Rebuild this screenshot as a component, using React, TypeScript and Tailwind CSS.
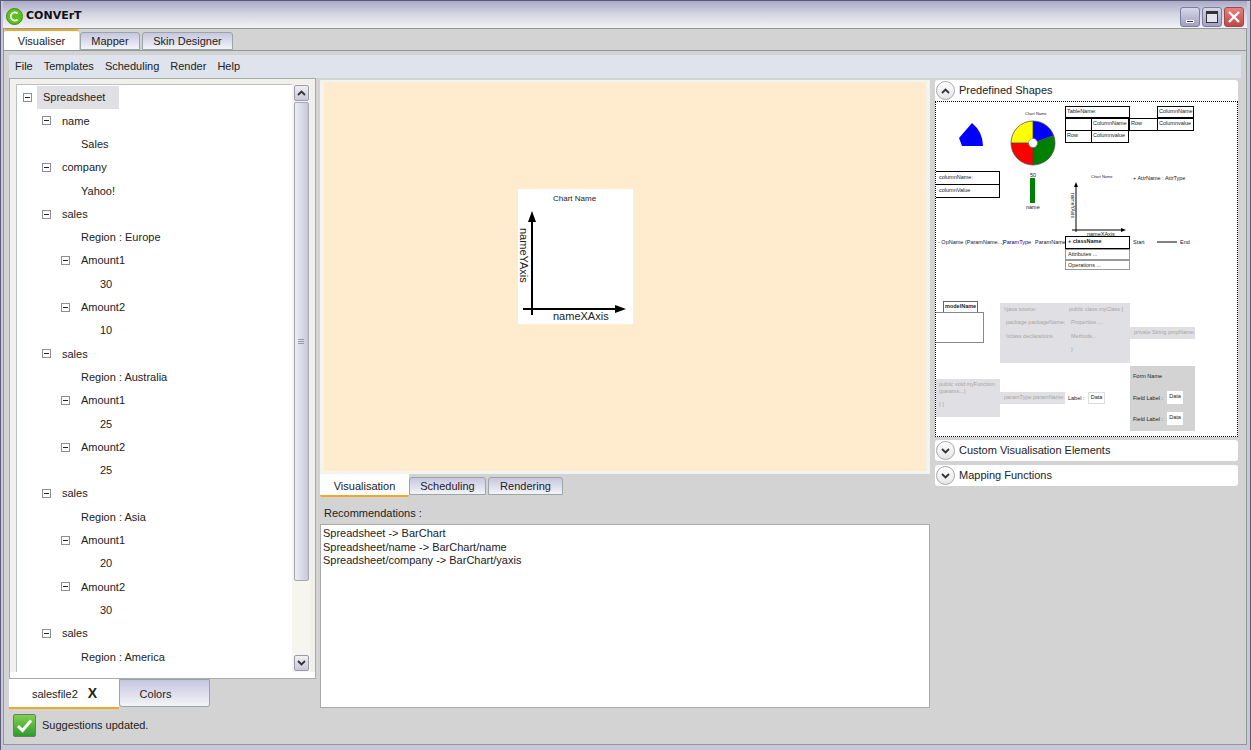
const treeRows: { label: string; level: number; box: boolean }[] = [
  { label: "Spreadsheet", level: 0, box: true },
  { label: "name", level: 1, box: true },
  { label: "Sales", level: 2, box: false },
  { label: "company", level: 1, box: true },
  { label: "Yahoo!", level: 2, box: false },
  { label: "sales", level: 1, box: true },
  { label: "Region : Europe", level: 2, box: false },
  { label: "Amount1", level: 2, box: true },
  { label: "30", level: 3, box: false },
  { label: "Amount2", level: 2, box: true },
  { label: "10", level: 3, box: false },
  { label: "sales", level: 1, box: true },
  { label: "Region : Australia", level: 2, box: false },
  { label: "Amount1", level: 2, box: true },
  { label: "25", level: 3, box: false },
  { label: "Amount2", level: 2, box: true },
  { label: "25", level: 3, box: false },
  { label: "sales", level: 1, box: true },
  { label: "Region : Asia", level: 2, box: false },
  { label: "Amount1", level: 2, box: true },
  { label: "20", level: 3, box: false },
  { label: "Amount2", level: 2, box: true },
  { label: "30", level: 3, box: false },
  { label: "sales", level: 1, box: true },
  { label: "Region : America", level: 2, box: false },
];

const menus = ["File", "Templates", "Scheduling", "Render", "Help"];

const inactiveTab =
  "flex items-center justify-center rounded-t-[3px] border border-[#9aa5a5] bg-gradient-to-b from-[#c6c6e0] to-[#f4f4f8] text-[#222]";

function Tree() {
  return (
    <div className="flex-1 overflow-hidden border-l border-t border-[#b9c0c8] bg-white pt-[1px]">
      {treeRows.map((row, i) => (
        <TreeRow key={i} {...row} />
      ))}
    </div>
  );
}

function TreeRow({ label, level, box }: { label: string; level: number; box: boolean }) {
  const boxIndent = ["pl-[6px]", "pl-[25px]", "pl-[44px]"][level];
  const textIndent = ["pl-[26px]", "pl-[45px]", "pl-[64px]", "pl-[83px]"][level];
  return (
    <div className={`flex h-[23.3px] items-center ${box ? boxIndent : textIndent}`}>
      {box && (
        <span className="mr-[11px] flex h-[9px] w-[9px] shrink-0 items-center justify-center border border-[#8a8f98] bg-white">
          <span className="h-px w-[5px] bg-[#222]" />
        </span>
      )}
      <span className={level === 0 ? "-ml-[6px] flex h-[23px] w-[82px] items-center bg-[#dfdfe4] pl-[6px]" : ""}>
        {label}
      </span>
    </div>
  );
}

function Chevron({ up }: { up?: boolean }) {
  return (
    <svg width="9" height="6" viewBox="0 0 9 6">
      <path d={up ? "M1 5 L4.5 1.5 L8 5" : "M1 1 L4.5 4.5 L8 1"} fill="none" stroke="#333" strokeWidth="1.8" />
    </svg>
  );
}

function ScrollBar() {
  return (
    <div className="flex w-[18px] shrink-0 flex-col items-center bg-[#f6f5f0] pt-[1px]">
      <div className="flex h-[16px] w-[15px] shrink-0 items-center justify-center rounded-[2px] border border-[#9a9aa8] bg-gradient-to-b from-[#f0f0f5] to-[#c8c8d8]">
        <Chevron up />
      </div>
      <div className="mt-[1px] flex h-[479px] w-[15px] shrink-0 items-center justify-center rounded-[2px] border border-[#a4a4b2] bg-gradient-to-r from-[#eeeef4] to-[#c8c8d8]">
        <div className="flex flex-col gap-px">
          <span className="h-px w-[6px] bg-[#9a9aa8]" />
          <span className="h-px w-[6px] bg-[#9a9aa8]" />
          <span className="h-px w-[6px] bg-[#9a9aa8]" />
        </div>
      </div>
      <div className="mt-[74px] flex h-[16px] w-[15px] shrink-0 items-center justify-center rounded-[2px] border border-[#9a9aa8] bg-gradient-to-b from-[#f0f0f5] to-[#c8c8d8]">
        <Chevron />
      </div>
    </div>
  );
}

function LeftPanel() {
  return (
    <div className="flex w-[307px] shrink-0 flex-col">
      <div className="flex h-[601px] flex-col border border-[#a8aca8] bg-[#f1f0ea]">
        <div className="flex h-[593px] pl-[6px] pr-[5px] pt-[5px]">
          <Tree />
          <ScrollBar />
        </div>
        <div className="flex-1 bg-white" />
      </div>
      <div className="flex h-[30px] items-start">
        <div className="flex h-[30px] w-[110px] items-center justify-center gap-[10px] border-b-2 border-[#f0a828] bg-white pl-px">
          <span className="pt-[3px]">salesfile2</span>
          <span className="text-[14px] font-bold">X</span>
        </div>
        <div className={`h-[28px] w-[91px] !rounded-t-none rounded-b-[3px] pr-[18px] pt-[3px] ${inactiveTab}`}>Colors</div>
      </div>
    </div>
  );
}

function ChartPreview() {
  return (
    <div className="relative h-[135px] w-[115px] bg-white">
      <span className="absolute left-[35px] top-[4px] whitespace-nowrap text-[8px] text-[#222]">Chart Name</span>
      <svg className="absolute inset-0" width="115" height="135" viewBox="0 0 115 135">
        <path d="M14 126 V28" stroke="#000" strokeWidth="2" />
        <path d="M14 22 L10 33 H18 Z" fill="#000" />
        <path d="M5 120 H102" stroke="#000" strokeWidth="2" />
        <path d="M108 120 L97 116 V124 Z" fill="#000" />
      </svg>
      <span className="absolute left-[35px] top-[120px] text-[11px] leading-[14px] text-[#222]">nameXAxis</span>
      <span className="absolute left-[-1px] top-[39px] text-[11px] leading-[14px] text-[#222] [writing-mode:vertical-rl]">
        nameYAxis
      </span>
    </div>
  );
}

function CenterPanel() {
  return (
    <div className="flex w-[610px] shrink-0 flex-col pt-[2px]">
      <div className="h-[394px] border-x-[4px] border-b-[3px] border-t-[2px] border-x-[#f4f4ee] border-b-[#f4f4ee] border-t-[#f4f4ee] bg-[#ffeccf] pl-[194px] pt-[107px]">
        <ChartPreview />
      </div>
      <div className="flex h-[23px] items-start">
        <div className="flex h-[23px] w-[89px] items-center justify-center rounded-b-[2px] border-b-2 border-[#f0a828] bg-white pt-[3px]">
          Visualisation
        </div>
        <div className={`mt-[3px] h-[18px] w-[77px] pt-px ${inactiveTab}`}>Scheduling</div>
        <div className={`ml-[2px] mt-[3px] h-[18px] w-[75px] pt-px ${inactiveTab}`}>Rendering</div>
      </div>
      <div className="flex h-[27px] items-center pl-[4px] pt-[6px]">Recommendations :</div>
      <div className="h-[184px] border border-[#a8aca8] bg-white pl-[2px] pt-[2px] leading-[13.5px]">
        <div>Spreadsheet -&gt; BarChart</div>
        <div>Spreadsheet/name -&gt; BarChart/name</div>
        <div>Spreadsheet/company -&gt; BarChart/yaxis</div>
      </div>
    </div>
  );
}

function CircleIcon({ up }: { up?: boolean }) {
  return (
    <span className="mx-px flex h-[19px] w-[19px] items-center justify-center rounded-full border border-[#a8a8a8] bg-gradient-to-b from-white to-[#e6e6ea]">
      <Chevron up={up} />
    </span>
  );
}

function AccordionHead({ title, up, className }: { title: string; up?: boolean; className?: string }) {
  return (
    <div className={`flex h-[21px] items-center gap-[3px] rounded-t-[3px] bg-white text-[11px] ${className ?? ""}`}>
      <CircleIcon up={up} />
      <span>{title}</span>
    </div>
  );
}

function Pie() {
  return (
    <svg className="absolute left-[75px] top-[19px]" width="46" height="46" viewBox="-23 -23 46 46">
      <path d="M0 0 L0 -22 A22 22 0 0 1 20.7 -7.5 Z" fill="#0000ff" />
      <path d="M0 0 L20.7 -7.5 A22 22 0 0 1 0 22 Z" fill="#008000" />
      <path d="M0 0 L0 22 A22 22 0 0 1 -22 0 Z" fill="#ff0000" />
      <path d="M0 0 L-22 0 A22 22 0 0 1 0 -22 Z" fill="#ffff00" />
      <path d="M0 -22 V22 M-22 0 H0 M0 0 L20.7 -7.5" stroke="#444" strokeWidth="0.8" />
      <circle r="22" fill="none" stroke="#555" strokeWidth="0.8" />
      <circle r="4.5" fill="#fff" stroke="#666" strokeWidth="0.5" />
    </svg>
  );
}

// canvas of shapes: every item's place on the canvas is the content here
function ShapesCanvas() {
  const cell = "absolute overflow-hidden whitespace-nowrap border-[1.5px] border-black bg-white pl-[1px] leading-[9px]";
  const tiny = "absolute whitespace-nowrap leading-[8px]";
  const soft = "absolute whitespace-nowrap leading-[8px] text-[#a9a69c]";
  return (
    <div className="h-[336px] overflow-hidden border border-dotted border-black bg-white text-[5.5px] text-[#222]">
      <div className="relative -m-px h-[336px]">
        <svg className="absolute left-[23px] top-[20px]" width="28" height="28" viewBox="0 0 28 28">
          <path d="M14 2 L1 17 L4 25 H25 Q25 11 14 2 Z" fill="#0000ff" />
        </svg>
        <span className={`${tiny} left-[90px] top-[9px] text-[4px]`}>Chart Name</span>
        <Pie />

        <div className={`${cell} left-[130px] top-[5px] h-[12px] w-[65px]`}>TableName:</div>
        <div className={`${cell} left-[130px] top-[17px] h-[13px] w-[27px]`} />
        <div className={`${cell} left-[156px] top-[17px] h-[13px] w-[38px]`}>ColumnName</div>
        <div className={`${cell} left-[130px] top-[29px] h-[13px] w-[27px]`}>Row</div>
        <div className={`${cell} left-[156px] top-[29px] h-[13px] w-[38px]`}>Columnvalue</div>
        <div className={`${cell} left-[222px] top-[5px] h-[12px] w-[37px]`}>ColumnName</div>
        <div className={`${cell} left-[194px] top-[17px] h-[13px] w-[29px]`}>Row</div>
        <div className={`${cell} left-[222px] top-[17px] h-[13px] w-[37px]`}>Columnvalue</div>

        <div className={`${cell} left-0 top-[70px] h-[14px] w-[65px] pl-[3px] leading-[11px]`}>columnName:</div>
        <div className={`${cell} left-0 top-[83px] h-[14px] w-[65px] pl-[3px] leading-[11px]`}>columnValue</div>

        <span className={`${tiny} left-[95px] top-[70px]`}>50</span>
        <div className="absolute left-[95px] top-[77px] h-[25px] w-[5px] bg-[#008000]" />
        <span className={`${tiny} left-[91px] top-[102px]`}>name</span>

        <span className={`${tiny} left-[156px] top-[72px] text-[4px]`}>Chart Name</span>
        <svg className="absolute left-[135px] top-[79px]" width="60" height="60" viewBox="0 0 60 60">
          <path d="M6 52 V5 M2 50 H52" stroke="#000" strokeWidth="1" />
          <path d="M6 2 L4 7 H8 Z M56 50 L51 48 V52 Z" fill="#000" />
        </svg>
        <span className={`${tiny} left-[134px] top-[92px] text-[5px] [writing-mode:vertical-rl]`}>nameYAxis</span>
        <span className={`${tiny} left-[152px] top-[129px]`}>nameXAxis</span>
        <span className={`${tiny} left-[198px] top-[73px]`}>+ AttrName : AttrType</span>

        <span className={`${tiny} left-[3px] top-[137px]`}>- OpName (ParamName...)</span>
        <span className={`${tiny} left-[68px] top-[137px] text-[#00009a]`}>ParamType</span>
        <span className={`${tiny} left-[100px] top-[137px]`}>ParamName:</span>
        <div className={`${cell} left-[130px] top-[135px] h-[13px] w-[65px] pl-[2px] font-bold`}>+ className</div>
        <div className="absolute left-[130px] top-[148px] h-[11px] w-[65px] border border-[#999] pl-[2px] leading-[8px]">Attributes ...</div>
        <div className="absolute left-[130px] top-[159px] h-[10px] w-[65px] border border-[#999] pl-[2px] leading-[8px]">Operations ...</div>
        <span className={`${tiny} left-[198px] top-[137px]`}>Start</span>
        <div className="absolute left-[222px] top-[140px] h-[2px] w-[20px] bg-[#808080]" />
        <span className={`${tiny} left-[245px] top-[137px]`}>End</span>

        <div className={`${cell} left-[8px] top-[200px] h-[12px] w-[35px] !border-[1px] !border-[#666] pl-[1px] font-bold`}>modelName</div>
        <div className="absolute left-0 top-[211px] h-[31px] w-[49px] border border-[#888]" />

        <div className="absolute left-[65px] top-[202px] h-[60px] w-[130px] bg-[#dfdfe4]" />
        <span className={`${soft} left-[69px] top-[204px]`}>\\java source:</span>
        <span className={`${soft} left-[71px] top-[217px]`}>package packageName;</span>
        <span className={`${soft} left-[71px] top-[231px]`}>\\class declarations</span>
        <span className={`${soft} left-[134px] top-[204px]`}>public class myClass {"{"}</span>
        <span className={`${soft} left-[136px] top-[217px]`}>Properties ...</span>
        <span className={`${soft} left-[136px] top-[231px]`}>Methods...</span>
        <span className={`${soft} left-[136px] top-[244px]`}>{"}"}</span>

        <div className="absolute left-[195px] top-[226px] h-[12px] w-[65px] overflow-hidden whitespace-nowrap bg-[#dfdfe4] pl-[4px] leading-[11px] text-[#a9a69c]">private String propName;</div>

        <div className="absolute left-0 top-[278px] h-[38px] w-[65px] bg-[#dfdfe4] pl-[4px] pt-[2px] leading-[7px] text-[#a9a69c]">
          <div>public void myFunction</div>
          <div>(params...)</div>
          <div className="mt-[6px]">{"{ }"}</div>
        </div>
        <div className="absolute left-[65px] top-[291px] h-[12px] w-[65px] overflow-hidden whitespace-nowrap bg-[#dfdfe4] pl-[4px] leading-[11px] text-[#a9a69c]">paramType paramName</div>
        <span className={`${tiny} left-[133px] top-[293px]`}>Label :</span>
        <div className="absolute left-[153px] top-[291px] h-[12px] w-[17px] border border-[#ddd] text-center leading-[9px]">Data</div>

        <div className="absolute left-[195px] top-[265px] h-[65px] w-[65px] bg-[#d3d3d3]" />
        <span className={`${tiny} left-[198px] top-[271px]`}>Form Name</span>
        <span className={`${tiny} left-[198px] top-[293px]`}>Field Label :</span>
        <div className="absolute left-[232px] top-[290px] h-[13px] w-[16px] bg-white text-center leading-[11px]">Data</div>
        <span className={`${tiny} left-[198px] top-[314px]`}>Field Label :</span>
        <div className="absolute left-[232px] top-[311px] h-[13px] w-[16px] bg-white text-center leading-[11px]">Data</div>
      </div>
    </div>
  );
}

function RightPanel() {
  return (
    <div className="flex w-[303px] shrink-0 flex-col pt-[2px]">
      <AccordionHead title="Predefined Shapes" up />
      <ShapesCanvas />
      <AccordionHead title="Custom Visualisation Elements" className="mt-[3px] rounded-b-[3px]" />
      <AccordionHead title="Mapping Functions" className="mt-[4px] rounded-b-[3px]" />
    </div>
  );
}

function TitleBar() {
  return (
    <div className="flex h-[27px] shrink-0 items-center bg-gradient-to-b from-[#aaaac8] via-[#d6d6e4] to-[#f2f2f6] pl-[3px] pr-[3px] pt-[4px]">
      <svg width="17" height="17" viewBox="0 0 17 17">
        <circle cx="8.5" cy="8.5" r="8" fill="#5cc020" stroke="#3c8c14" />
        <path d="M11.5 5.5 A4 4 0 1 0 11.5 11.5" fill="none" stroke="#fff" strokeWidth="1.8" />
      </svg>
      <span className="ml-[3px] font-['DejaVu_Sans'] text-[11px] font-semibold text-[#111]">CONVErT</span>
      <div className="ml-auto flex gap-[2px]">
        <span className="flex h-[20px] w-[20px] items-end justify-center rounded-[3px] border border-[#7c7ca0] bg-gradient-to-b from-[#d8d8e8] to-[#a0a0c0] pb-[3px]">
          <span className="h-[3px] w-[8px] border border-white bg-[#333]" />
        </span>
        <span className="flex h-[20px] w-[20px] items-center justify-center rounded-[3px] border border-[#7c7ca0] bg-gradient-to-b from-[#d8d8e8] to-[#a0a0c0]">
          <span className="h-[12px] w-[12px] border border-[#333] border-t-[3px] bg-[#e4e4f0]" />
        </span>
        <span className="flex h-[20px] w-[20px] items-center justify-center rounded-[3px] border border-[#a04848] bg-gradient-to-b from-[#e88080] to-[#c04848]">
          <svg width="14" height="14" viewBox="0 0 14 14">
            <path d="M2 2 L12 12 M12 2 L2 12" stroke="#fff" strokeWidth="2.4" />
          </svg>
        </span>
      </div>
    </div>
  );
}

function TopTabs() {
  return (
    <div className="flex h-[22px] shrink-0 items-end border-b border-[#8f9a9c]">
      <div className="flex h-[21px] w-[75px] items-center justify-center rounded-t-[3px] border-t-2 border-[#f0a828] bg-white pt-[2px]">
        Visualiser
      </div>
      <div className={`ml-px h-[18px] w-[60px] pt-px ${inactiveTab}`}>Mapper</div>
      <div className={`ml-[2px] h-[18px] w-[91px] pt-px ${inactiveTab}`}>Skin Designer</div>
    </div>
  );
}

export default function App() {
  return (
    <div className="h-[750px] w-[1251px] overflow-hidden border-x border-t border-b-0 border-[#5c5c78] bg-[#c8c8da] font-['Liberation_Sans',sans-serif] text-[11px] text-[#222]">
      <div className="flex h-full flex-col pl-[2px] pr-[3px]">
        <TitleBar />
        <div className="flex h-[717px] flex-col border border-[#8f9a94] bg-[#d3d3d3]">
          <TopTabs />
          <div className="mx-[5px] mt-[4px] flex h-[23px] shrink-0 items-center gap-[11px] bg-[#dfe3ec] pl-[6px]">
            {menus.map((m) => (
              <span key={m}>{m}</span>
            ))}
          </div>
          <div className="mx-[5px] flex gap-[4px]">
            <LeftPanel />
            <CenterPanel />
            <div className="ml-px">
              <RightPanel />
            </div>
          </div>
          <div className="mt-[5px] flex items-center gap-[6px] pl-[9px]">
            <span className="flex h-[23px] w-[23px] items-center justify-center rounded-[2px] border border-[#6c7c6c] bg-gradient-to-b from-[#7fd050] to-[#2c9c2c]">
              <svg width="17" height="15" viewBox="0 0 17 15">
                <path d="M2 8 L6.5 12.5 L15 2.5" fill="none" stroke="#fff" strokeWidth="3" />
              </svg>
            </span>
            <span>Suggestions updated.</span>
          </div>
        </div>
      </div>
    </div>
  );
}
